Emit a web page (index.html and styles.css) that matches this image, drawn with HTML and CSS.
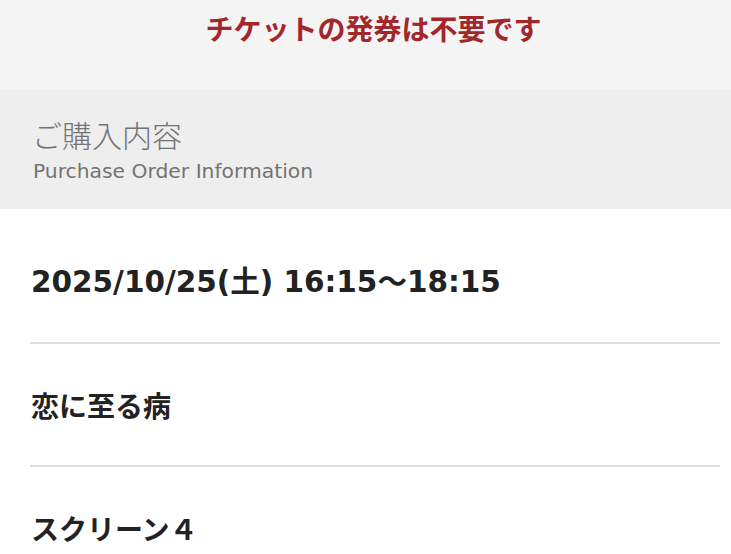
FILE: index.html
```html
<!DOCTYPE html>
<html lang="ja">
<head>
    <meta charset="UTF-8">
    <meta name="viewport" content="width=device-width, initial-scale=1.0">
    <title>ご購入内容</title>
    <link rel="stylesheet" href="styles.css">
</head>
<body>
    <div id="notice">チケットの発券は不要です</div>
    <div id="section-head">
        <div class="head-ja">ご購入内容</div>
        <div class="head-en">Purchase Order Information</div>
    </div>
    <div id="order-list">
        <div class="order-item order-date">2025/10/25(土) 16:15〜18:15</div>
        <div class="order-item">恋に至る病</div>
        <div class="order-item">スクリーン４</div>
    </div>
</body>
</html>
```

FILE: styles.css
```css
body {
    margin: 0;
    height: 554px;
    font-family: "Noto Sans CJK JP", "Noto Sans", sans-serif;
    background-color: #fff;
    overflow: hidden;
}
#notice {
    height: 89px;
    padding: 8px 0 0 16px;
    box-sizing: border-box;
    background-color: #f4f4f5;
    color: #a3262a;
    font-size: 28px;
    font-weight: bold;
    line-height: 40px;
    text-align: center;
}
#section-head {
    height: 120px;
    box-sizing: border-box;
    padding: 25px 0 0 32px;
    background-color: #eeeeee;
    color: #737373;
}
.head-ja {
    font-size: 30px;
    font-weight: 300;
    line-height: 40px;
}
.head-en {
    font-family: "DejaVu Sans", sans-serif;
    font-size: 20.3px;
    line-height: 30px;
    margin: 2px 0 0 1px;
}
#order-list {
    padding: 12px 11px 0 30px;
}
.order-item {
    padding: 41px 0 40px 1px;
    line-height: 40px;
    font-size: 28px;
    font-weight: bold;
    color: #222;
    border-bottom: 2px solid #dedede;
}
.order-date {
    font-family: "DejaVu Sans", "Noto Sans CJK JP", sans-serif;
    font-size: 29.5px;
}
```
